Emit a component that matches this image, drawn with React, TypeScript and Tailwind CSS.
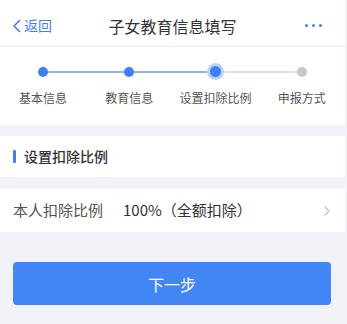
import React from "react";

const steps = [
  { name: "基本信息", state: "done" },
  { name: "教育信息", state: "done" },
  { name: "设置扣除比例", state: "active" },
  { name: "申报方式", state: "todo" },
];

const lineColor = (i: number) => (i < 2 ? "bg-[#8db4f6]" : "bg-[#dfe0e6]");

const App: React.FC = () => {
  return (
    <div
      className="w-[347px] h-[324px] bg-[#f1f3f8] overflow-hidden"
      style={{ fontFamily: '"Noto Sans CJK SC", "Noto Sans", sans-serif' }}
    >
      <div className="w-[345px]">
        {/* header */}
        <div className="h-[47px] bg-white border-b border-[#ececf0] flex items-center px-3 pt-[5px] relative">
          <div className="flex items-center text-[#3f7ff3] text-[14px] gap-[2px]">
            <svg width="10" height="14" viewBox="0 0 10 14" fill="none">
              <path d="M7.5 1.5L2 7l5.5 5.5" stroke="#3f7ff3" strokeWidth="1.6" strokeLinecap="round" strokeLinejoin="round" />
            </svg>
            <span>返回</span>
          </div>
          <div className="absolute inset-0 pt-[5px] flex items-center justify-center pointer-events-none">
            <span className="text-[16px] text-[#333]">子女教育信息填写</span>
          </div>
          <div className="ml-auto flex gap-[4px] mr-[11px]">
            <span className="w-[3px] h-[3px] rounded-full bg-[#3f7ff3]" />
            <span className="w-[3px] h-[3px] rounded-full bg-[#3f7ff3]" />
            <span className="w-[3px] h-[3px] rounded-full bg-[#3f7ff3]" />
          </div>
        </div>

        {/* steps */}
        <div className="h-[78px] bg-white grid grid-cols-4 pt-[16px]">
          {steps.map((s, i) => (
            <div key={s.name} className="flex flex-col items-center">
              <div className="relative w-full h-[17px] flex items-center justify-center">
                {i > 0 && <div className={`absolute left-0 right-1/2 top-[7.5px] h-[2px] ${lineColor(i - 1)}`} />}
                {i < steps.length - 1 && <div className={`absolute left-1/2 right-0 top-[7.5px] h-[2px] ${lineColor(i)}`} />}
                {s.state === "done" && <div className="relative w-[10px] h-[10px] rounded-full bg-[#3f7ff3]" />}
                {s.state === "active" && (
                  <div className="relative w-[17px] h-[17px] rounded-full bg-[#bcd4fb] flex items-center justify-center">
                    <div className="w-[11px] h-[11px] rounded-full bg-[#3f7ff3]" />
                  </div>
                )}
                {s.state === "todo" && <div className="relative w-[10px] h-[10px] rounded-full bg-[#c6c7d0]" />}
              </div>
              <div className="mt-[10px] text-[12px] text-[#555] leading-[16px]">{s.name}</div>
            </div>
          ))}
        </div>

        {/* section title */}
        <div className="mt-[11px] h-[41px] bg-white flex items-center px-[13px]">
          <span className="w-[3px] h-[13px] rounded-[1px] bg-[#3f7ff3] mr-[8px]" />
          <span className="text-[14px] text-[#333] font-medium">设置扣除比例</span>
        </div>

        {/* row */}
        <div className="mt-[12px] h-[43px] bg-white flex items-center px-[13px]">
          <span className="text-[15px] text-[#555] w-[110px]">本人扣除比例</span>
          <span className="text-[15px] text-[#333]">100%（全额扣除）</span>
          <svg className="ml-auto mr-[2px]" width="6" height="10" viewBox="0 0 6 10" fill="none">
            <path d="M1 1l4 4-4 4" stroke="#c4c4c8" strokeWidth="1.3" strokeLinecap="round" strokeLinejoin="round" />
          </svg>
        </div>

        {/* button */}
        <div className="px-[13px] pt-[30px]">
          <button className="w-[318px] h-[43px] rounded-[4px] bg-[#4285f4] text-white text-[16px] flex items-center justify-center">
            下一步
          </button>
        </div>
      </div>
    </div>
  );
};

export default App;
